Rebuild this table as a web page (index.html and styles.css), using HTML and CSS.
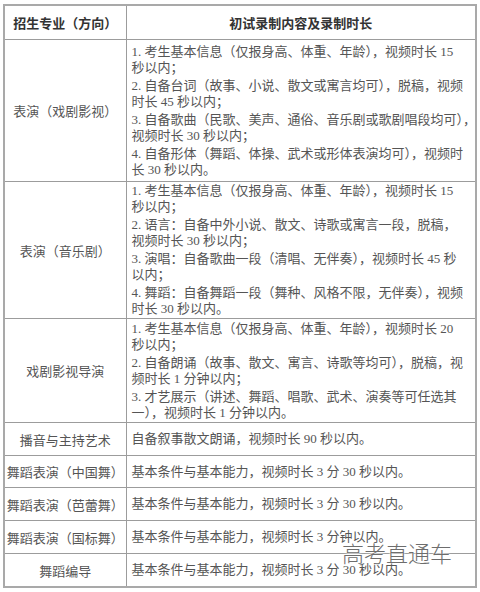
FILE: index.html
```html
<!DOCTYPE html>
<html lang="zh-CN">
<head>
<meta charset="utf-8">
<title>初试录制内容及录制时长</title>
<link rel="stylesheet" href="styles.css">
</head>
<body>
<div class="page">
  <table class="tbl">
    <colgroup><col class="c1"><col class="c2"></colgroup>
    <thead>
      <tr class="rh"><th>招生专业（方向）</th><th>初试录制内容及录制时长</th></tr>
    </thead>
    <tbody>
      <tr class="r1">
        <td class="major">表演（戏剧影视）</td>
        <td class="desc">
          <p><span>1. 考生基本信息（仅报身高、体重、年龄），视频时长 15</span><span>秒以内；</span></p>
          <p><span>2. 自备台词（故事、小说、散文或寓言均可），脱稿，视频</span><span>时长 45 秒以内；</span></p>
          <p><span>3. 自备歌曲（民歌、美声、通俗、音乐剧或歌剧唱段均可），</span><span>视频时长 30 秒以内；</span></p>
          <p><span>4. 自备形体（舞蹈、体操、武术或形体表演均可），视频时</span><span>长 30 秒以内。</span></p>
        </td>
      </tr>
      <tr class="r2">
        <td class="major">表演（音乐剧）</td>
        <td class="desc">
          <p><span>1. 考生基本信息（仅报身高、体重、年龄），视频时长 15</span><span>秒以内；</span></p>
          <p><span>2. 语言：自备中外小说、散文、诗歌或寓言一段，脱稿，</span><span>视频时长 30 秒以内；</span></p>
          <p><span>3. 演唱：自备歌曲一段（清唱、无伴奏），视频时长 45 秒</span><span>以内；</span></p>
          <p><span>4. 舞蹈：自备舞蹈一段（舞种、风格不限，无伴奏），视频</span><span>时长 30 秒以内。</span></p>
        </td>
      </tr>
      <tr class="r3">
        <td class="major">戏剧影视导演</td>
        <td class="desc">
          <p><span>1. 考生基本信息（仅报身高、体重、年龄），视频时长 20</span><span>秒以内；</span></p>
          <p><span>2. 自备朗诵（故事、散文、寓言、诗歌等均可），脱稿，视</span><span>频时长 1 分钟以内；</span></p>
          <p><span>3. 才艺展示（讲述、舞蹈、唱歌、武术、演奏等可任选其</span><span>一），视频时长 1 分钟以内。</span></p>
        </td>
      </tr>
      <tr class="r4">
        <td class="major">播音与主持艺术</td>
        <td class="desc"><p><span>自备叙事散文朗诵，视频时长 90 秒以内。</span></p></td>
      </tr>
      <tr class="r5">
        <td class="major">舞蹈表演（中国舞）</td>
        <td class="desc"><p><span>基本条件与基本能力，视频时长 3 分 30 秒以内。</span></p></td>
      </tr>
      <tr class="r6">
        <td class="major">舞蹈表演（芭蕾舞）</td>
        <td class="desc"><p><span>基本条件与基本能力，视频时长 3 分 30 秒以内。</span></p></td>
      </tr>
      <tr class="r7">
        <td class="major">舞蹈表演（国标舞）</td>
        <td class="desc"><p><span>基本条件与基本能力，视频时长 3 分钟以内。</span></p></td>
      </tr>
      <tr class="r8">
        <td class="major">舞蹈编导</td>
        <td class="desc"><p><span>基本条件与基本能力，视频时长 3 分 30 秒以内。</span></p></td>
      </tr>
    </tbody>
  </table>
  <div class="wm">高考直通车</div>
</div>
</body>
</html>
```

FILE: styles.css
```css
html, body {
  margin: 0;
  padding: 0;
  background: #ffffff;
}

.page {
  position: relative;
  width: 474px;
  padding: 4px 3px 0 3px;
}

.tbl {
  width: 474px;
  border-collapse: collapse;
  table-layout: fixed;
  font-family: "Liberation Serif", "Noto Sans CJK SC", serif;
  font-size: 13px;
  color: #555555;
  border: 2px solid #a9a9a9;
}

.c1 { width: 122px; }

.tbl th,
.tbl td {
  border: 1px solid #9c9c9c;
  padding: 0;
  vertical-align: middle;
}

.tbl th {
  font-weight: bold;
  color: #333333;
  text-align: center;
}

.major {
  text-align: center;
}

.desc {
  text-align: left;
  padding-left: 5px !important;
}

.desc p {
  margin: 0;
}

.desc p + p {
  margin-top: 2px;
}

.desc span {
  display: block;
  white-space: nowrap;
  line-height: 16px;
}

.rh th { height: 33px; }
.r1 td { height: 141px; }
.r2 td { height: 136px; }
.r3 td { height: 103px; }
.r4 td { height: 32px; }
.r5 td { height: 31px; }
.r6 td { height: 32px; }
.r7 td { height: 32px; }
.r8 td { height: 32px; }

.wm {
  position: absolute;
  left: 342px;
  top: 536px;
  font-family: "Noto Sans CJK SC", "Noto Sans", sans-serif;
  font-size: 22px;
  font-weight: 300;
  color: #6d6d6d;
  letter-spacing: 0px;
  text-shadow: 0 0 2px #ffffff, 0 0 2px #ffffff;
}
```
